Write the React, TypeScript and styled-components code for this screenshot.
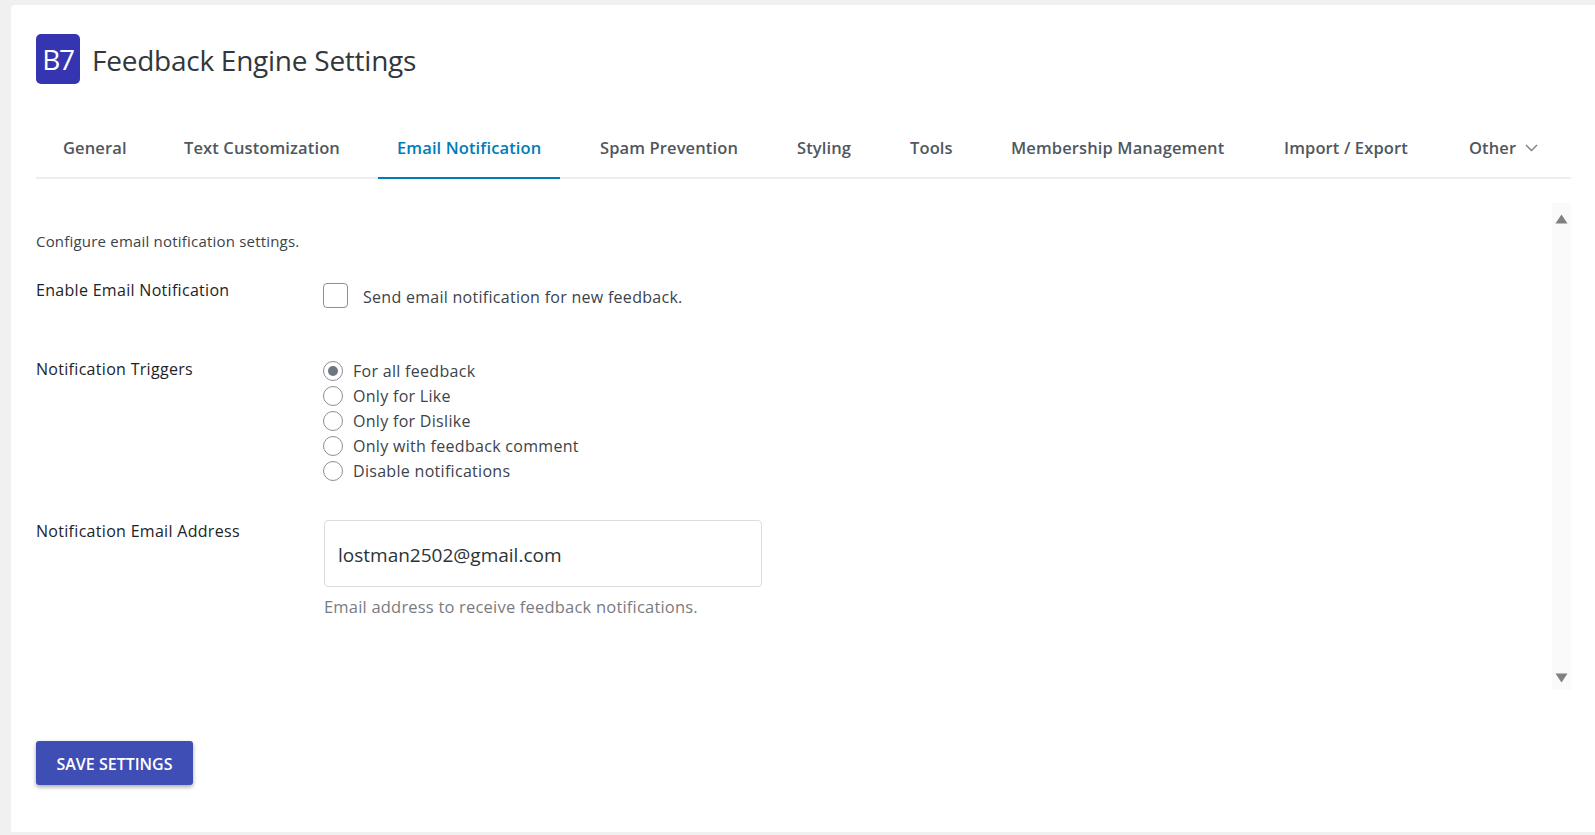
import React from "react";
import styled, { createGlobalStyle } from "styled-components";

const Global = createGlobalStyle`
  html, body { margin: 0; padding: 0; height: 100%; overflow: hidden; background: #f0f0f1; }
  body { font-family: "Open Sans", "Noto Sans", sans-serif; color: #2c3338; }
  #root { height: 100%; }
  * { box-sizing: border-box; }
`;

const Card = styled.main`
  margin: 5px 0 0 11px;
  height: 827px;
  background: #fff;
  border-radius: 4px 0 0 0;
  padding: 29px 24px 0 25px;
  display: flex;
  flex-direction: column;
`;

const Header = styled.header`
  display: flex;
  align-items: center;
  gap: 12px;
  height: 50px;
`;

const Logo = styled.div`
  width: 44px;
  height: 50px;
  border-radius: 5px;
  background: #3635b1;
  color: #fff;
  font-size: 28px;
  letter-spacing: -1.4px;
  display: flex;
  align-items: center;
  justify-content: center;
`;

const Title = styled.h1`
  margin: 2px 0 0;
  font-size: 28px;
  font-weight: 400;
  letter-spacing: -0.25px;
  color: #32373c;
`;

const Tabs = styled.nav`
  display: flex;
  height: 61px;
  margin-top: 34px;
  padding: 11px 0 0 8px;
  border-bottom: 2px solid #eeeeee;
`;

const Tab = styled.div<{ $active?: boolean; $w: number }>`
  width: ${(p) => p.$w - 21}px;
  height: 50px;
  margin-right: 21px;
  flex: none;
  display: flex;
  align-items: center;
  padding: 0 0 11px 19px;
  font-size: 16.5px;
  font-weight: 600;
  letter-spacing: 0.12px;
  white-space: nowrap;
  color: ${(p) => (p.$active ? "#007cba" : "#50575e")};
  border-bottom: 2px solid ${(p) => (p.$active ? "#007cba" : "transparent")};
`;

const Chevron = styled.svg`
  margin-left: 9px;
  width: 13px;
  height: 8px;
  flex: none;
`;

const Body = styled.section`
  display: flex;
  height: 487px;
  margin-top: 24px;
`;

const Content = styled.div`
  flex: 1;
  padding-top: 28px;
`;

const Rail = styled.div`
  width: 19px;
  background: #fafafa;
  display: flex;
  flex-direction: column;
  justify-content: space-between;
  align-items: center;
  padding: 11px 0 7px;
`;

const Intro = styled.p`
  margin: 0 0 28px;
  font-size: 15px;
  line-height: 20px;
  letter-spacing: 0.2px;
  color: #3c434a;
`;

const Row = styled.div<{ $h: number }>`
  display: flex;
  height: ${(p) => p.$h}px;
`;

const Label = styled.div`
  width: 287px;
  margin-top: -1px;
  font-size: 16px;
  line-height: 24px;
  letter-spacing: 0.3px;
  color: #1d2327;
`;

const CheckRow = styled.label`
  display: flex;
  height: 25px;
  margin-top: 4px;
`;

const CheckBox = styled.span`
  width: 25px;
  height: 25px;
  border: 1px solid #8c8f94;
  border-radius: 4px;
  background: #fff;
`;

const CheckText = styled.span`
  margin-left: 15px;
  margin-top: 2px;
  font-size: 16px;
  line-height: 24px;
  letter-spacing: 0.28px;
  color: #3c434a;
`;

const RadioList = styled.div`
  display: flex;
  flex-direction: column;
`;

const RadioRow = styled.label`
  display: flex;
  align-items: center;
  height: 25px;
  gap: 10px;
  font-size: 16px;
  letter-spacing: 0.3px;
  color: #3c434a;
`;

const RadioDot = styled.span<{ $on?: boolean }>`
  width: 20px;
  height: 20px;
  border-radius: 50%;
  border: 1px solid #8c8f94;
  display: flex;
  align-items: center;
  justify-content: center;
  &::after {
    content: "";
    display: ${(p) => (p.$on ? "block" : "none")};
    width: 10px;
    height: 10px;
    border-radius: 50%;
    background: #6c7781;
  }
`;

const Field = styled.div`
  display: flex;
  flex-direction: column;
  margin-left: 1px;
`;

const Input = styled.div`
  width: 438px;
  height: 67px;
  border: 1px solid #dcdcde;
  border-radius: 4px;
  padding: 2px 13px 0;
  display: flex;
  align-items: center;
  font-size: 19px;
  color: #2c3338;
`;

const Hint = styled.div`
  margin-top: 8px;
  font-size: 16.5px;
  line-height: 24px;
  letter-spacing: 0.2px;
  color: #787c82;
`;

const Footer = styled.div`
  margin-top: 51px;
`;

const SaveButton = styled.button`
  width: 157px;
  height: 44px;
  border: 0;
  border-radius: 3px;
  padding: 2px 0 0;
  background: #3f4eb5;
  color: #fff;
  font-family: inherit;
  font-size: 16px;
  font-weight: 600;
  text-transform: uppercase;
  box-shadow: 0 2px 4px rgba(0, 0, 0, 0.35);
`;

const tabs: [string, number][] = [
  ["General", 121],
  ["Text Customization", 213],
  ["Email Notification", 203],
  ["Spam Prevention", 197],
  ["Styling", 113],
  ["Tools", 101],
  ["Membership Management", 273],
  ["Import / Export", 185],
];

const triggers = ["For all feedback", "Only for Like", "Only for Dislike", "Only with feedback comment", "Disable notifications"];

export default function App() {
  return (
    <>
      <Global />
      <Card>
        <Header>
          <Logo>B7</Logo>
          <Title>Feedback Engine Settings</Title>
        </Header>
        <Tabs>
          {tabs.map(([t, w]) => (
            <Tab key={t} $w={w} $active={t === "Email Notification"}>{t}</Tab>
          ))}
          <Tab $w={120}>
            Other
            <Chevron viewBox="0 0 13 8" fill="none" stroke="#7a7f85" strokeWidth="1.4">
              <path d="M1 1l5.5 5.5L12 1" />
            </Chevron>
          </Tab>
        </Tabs>
        <Body>
          <Content>
            <Intro>Configure email notification settings.</Intro>
            <Row $h={79}>
              <Label>Enable Email Notification</Label>
              <CheckRow>
                <CheckBox />
                <CheckText>Send email notification for new feedback.</CheckText>
              </CheckRow>
            </Row>
            <Row $h={162}>
              <Label>Notification Triggers</Label>
              <RadioList>
                {triggers.map((t, i) => (
                  <RadioRow key={t}>
                    <RadioDot $on={i === 0} />
                    {t}
                  </RadioRow>
                ))}
              </RadioList>
            </Row>
            <Row $h={100}>
              <Label>Notification Email Address</Label>
              <Field>
                <Input>lostman2502@gmail.com</Input>
                <Hint>Email address to receive feedback notifications.</Hint>
              </Field>
            </Row>
          </Content>
          <Rail>
            <svg width="13" height="10" viewBox="0 0 13 10"><path d="M6.5 0.5L12.5 9.5H0.5Z" fill="#808080" /></svg>
            <svg width="13" height="10" viewBox="0 0 13 10"><path d="M6.5 9.5L12.5 0.5H0.5Z" fill="#808080" /></svg>
          </Rail>
        </Body>
        <Footer>
          <SaveButton>Save Settings</SaveButton>
        </Footer>
      </Card>
    </>
  );
}
